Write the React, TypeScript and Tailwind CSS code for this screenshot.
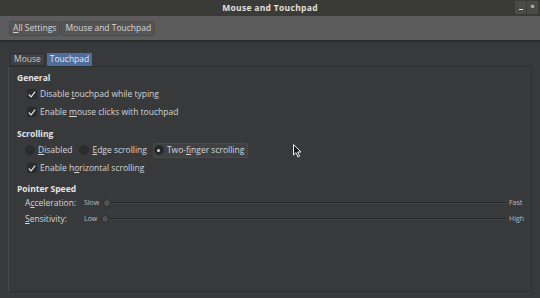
import React from 'react';

const font = { fontFamily: '"Open Sans", "DejaVu Sans", sans-serif' };

const Check: React.FC<{ label: React.ReactNode }> = ({ label }) => (
  <div className="flex items-center h-[18px] gap-[3px]">
    <span className="w-[10px] h-[10px] rounded-[2px] bg-[#2c2d2f] border border-[#282829] flex items-center justify-center">
      <svg width="10" height="9" viewBox="0 0 10 9">
        <path d="M1 4.5 L3.8 7.5 L9 0.8" stroke="#e6e6e6" strokeWidth="1.4" fill="none" />
      </svg>
    </span>
    <span>{label}</span>
  </div>
);

const Radio: React.FC<{ label: React.ReactNode; on?: boolean }> = ({ label, on }) => (
  <div className={`flex items-center gap-[3px] h-[15px] pr-[3px] ${on ? 'bg-[#3f4143] border border-[#484a4c] rounded-[2px]' : 'border border-transparent'}`}>
    <span className={`w-[10px] h-[10px] rounded-full flex items-center justify-center border border-[#2a2b2c] ${on ? 'bg-[#25272a]' : 'bg-[#2b2c2e]'}`}>
      {on && <span className="w-[3px] h-[3px] rounded-full bg-[#d8d8d8]" />}
    </span>
    <span>{label}</span>
  </div>
);

const Slider: React.FC<{ label: React.ReactNode; lo: string; hi: string; loW: string }> = ({ label, lo, hi, loW }) => (
  <div className="flex items-center h-[16px]">
    <span className="w-[67px] pl-[8px]">{label}</span>
    <span className={`${loW} text-[7px] text-[#bdbdbd]`}>{lo}</span>
    <div className="relative flex-1 h-[10px] flex items-center">
      <div className="w-full h-[2px] bg-[#262728] border-b border-[#454648]" />
      <span className="absolute left-0 w-[8px] h-[8px] rounded-full bg-[#505153] border border-[#2c2c2c]" />
    </div>
    <span className="w-[22px] pl-[4px] text-[7px] text-[#bdbdbd]">{hi}</span>
  </div>
);

export default function App() {
  return (
    <div className="w-[540px] h-[298px] bg-[#38393b] text-[#d6d6d6] text-[8.5px] flex flex-col overflow-hidden relative" style={font}>
      {/* title bar */}
      <div className="h-[16px] bg-[#3a3a39] flex items-center justify-center relative">
        <span className="font-bold text-[#e2e0da] text-[8.5px] tracking-[0.3px]">Mouse and Touchpad</span>
        <div className="absolute right-[2px] top-[1px] flex gap-[1px]">
          <span className="w-[11px] h-[13px] bg-[#4a4a49] flex items-center justify-center">
            <span className="w-[4px] h-[1px] bg-[#e6e6e6] mt-[3px]" />
          </span>
          <span className="w-[11px] h-[13px] bg-[#4a4a49] flex items-center justify-center text-[#e6e6e6] text-[7px] font-bold">×</span>
        </div>
      </div>
      {/* toolbar */}
      <div className="h-[26px] bg-[#5c5c5c] border-b-2 border-[#2c2c2d] flex items-center px-[9px] gap-[1px]">
        <span className="h-[15px] px-[3px] flex items-center bg-[#555556] border border-[#4b4b4b] rounded-[2px]">
          <u>A</u>ll Settings
        </span>
        <span className="h-[15px] px-[3px] flex items-center bg-[#555556] border border-[#4b4b4b] rounded-[2px]">
          Mouse and Touchpad
        </span>
      </div>
      {/* tabs */}
      <div className="flex px-[10px] pt-[10px] gap-[2px] h-[24px] items-end">
        <span className="h-[13px] px-[3px] flex items-center bg-[#404143] border border-[#2f3031] text-[#c8c8c8]">Mouse</span>
        <span className="h-[13px] px-[3px] flex items-center bg-[#4d6d9c] text-[#e6eaf0]">Touchpad</span>
      </div>
      {/* panel */}
      <div className="mx-[8px] mb-[6px] flex-1 border border-[#2e2f30] border-l-[#48494b] bg-[#38393b] pl-[8px] pr-[4px] pt-[4px]">
        <div className="font-bold text-[#e4e4e4] h-[14px] flex items-center">General</div>
        <div className="pl-[10px]">
          <Check label={<>Disable <u>t</u>ouchpad while typing</>} />
          <Check label={<>Enable <u>m</u>ouse clicks with touchpad</>} />
        </div>
        <div className="font-bold text-[#e4e4e4] h-[14px] flex items-center mt-[6px]">Scrolling</div>
        <div className="pl-[7px] flex gap-[2px] h-[18px] items-center">
          <Radio label={<><u>D</u>isabled</>} />
          <Radio label={<><u>E</u>dge scrolling</>} />
          <Radio on label={<>Two-<u>f</u>inger scrolling</>} />
        </div>
        <div className="pl-[10px]">
          <Check label={<>Enable h<u>o</u>rizontal scrolling</>} />
        </div>
        <div className="font-bold text-[#e4e4e4] h-[12px] flex items-center mt-[6px]">Pointer Speed</div>
        <Slider label={<>A<u>c</u>celeration:</>} lo="Slow" loW="w-[19px]" hi="Fast" />
        <Slider label={<><u>S</u>ensitivity:</>} lo="Low" loW="w-[17px]" hi="High" />
      </div>
      {/* mouse pointer */}
      <svg className="absolute left-[293px] top-[144px]" width="9" height="14" viewBox="0 0 9 14">
        <path d="M0.5 0.5 L0.5 11 L3 8.6 L5 13 L6.6 12.2 L4.7 8 L8 8 Z" fill="#1a1a1a" stroke="#f0f0f0" strokeWidth="1" />
      </svg>
    </div>
  );
}
